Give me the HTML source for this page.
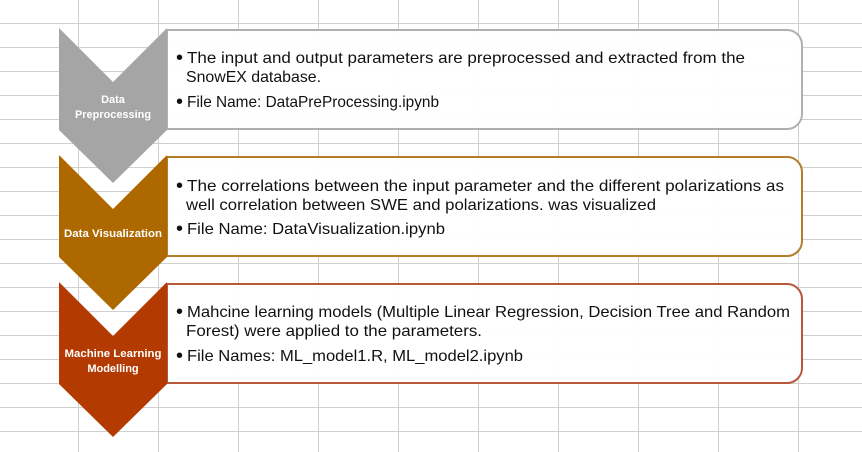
<!DOCTYPE html>
<html><head><meta charset="utf-8"><style>
html,body{margin:0;padding:0;background:#fff;}
svg{display:block;}
</style></head><body>
<svg width="862" height="452" xmlns="http://www.w3.org/2000/svg">
<defs>
<pattern id="g" width="80" height="24" patternUnits="userSpaceOnUse" x="78" y="23">
<path d="M0 0.5H80M0.5 0V24" stroke="#d0d0d0" stroke-width="1" fill="none"/>
</pattern>
</defs>
<rect width="862" height="452" fill="#fff"/>
<rect width="862" height="452" fill="url(#g)"/>

<g font-family="Liberation Sans, sans-serif" font-size="16" fill="#111">
<path d="M167 30H787a15 15 0 0 1 15 15V114a15 15 0 0 1 -15 15H167Z" fill="#fff" fill-opacity="0.92" stroke="#b0b0b0" stroke-width="2"/>
<text x="176" y="64" font-size="20">•</text>
<text x="187" y="63" textLength="558" lengthAdjust="spacingAndGlyphs">The input and output parameters are preprocessed and extracted from the</text>
<text x="186" y="82" textLength="135" lengthAdjust="spacingAndGlyphs">SnowEX database.</text>
<text x="176" y="108" font-size="20">•</text>
<text x="187" y="107" textLength="252" lengthAdjust="spacingAndGlyphs">File Name: DataPreProcessing.ipynb</text>

<path d="M167 157H787a15 15 0 0 1 15 15V241a15 15 0 0 1 -15 15H167Z" fill="#fff" fill-opacity="0.92" stroke="#b47d2e" stroke-width="2"/>
<text x="176" y="192" font-size="20">•</text>
<text x="187" y="191" textLength="597" lengthAdjust="spacingAndGlyphs">The correlations between the input parameter and the different polarizations as</text>
<text x="186" y="210" textLength="470" lengthAdjust="spacingAndGlyphs">well correlation between SWE and polarizations. was visualized</text>
<text x="176" y="235" font-size="20">•</text>
<text x="187" y="234" textLength="258" lengthAdjust="spacingAndGlyphs">File Name: DataVisualization.ipynb</text>

<path d="M167 284H787a15 15 0 0 1 15 15V368a15 15 0 0 1 -15 15H167Z" fill="#fff" fill-opacity="0.92" stroke="#b8583a" stroke-width="2"/>
<text x="176" y="318" font-size="20">•</text>
<text x="187" y="317" textLength="603" lengthAdjust="spacingAndGlyphs">Mahcine learning models (Multiple Linear Regression, Decision Tree and Random</text>
<text x="186" y="336" textLength="296" lengthAdjust="spacingAndGlyphs">Forest) were applied to the parameters.</text>
<text x="176" y="362" font-size="20">•</text>
<text x="187" y="361" textLength="336" lengthAdjust="spacingAndGlyphs">File Names: ML_model1.R, ML_model2.ipynb</text>
</g>

<path d="M59 28L113 82L167 28V130L113 183L59 130Z" fill="#a5a5a5"/>
<path d="M59 155L113 209L167 155V257L113 310L59 257Z" fill="#ad6800"/>
<path d="M59 282L113 336L167 282V384L113 437L59 384Z" fill="#b33a00"/>

<g font-family="Liberation Sans, sans-serif" font-size="11" font-weight="bold" fill="#fff" text-anchor="middle">
<text x="113" y="103">Data</text>
<text x="113" y="118" textLength="76" lengthAdjust="spacingAndGlyphs">Preprocessing</text>
<text x="113" y="237" textLength="98" lengthAdjust="spacingAndGlyphs">Data Visualization</text>
<text x="113" y="357" textLength="97" lengthAdjust="spacingAndGlyphs">Machine Learning</text>
<text x="113" y="372">Modelling</text>
</g>
</svg>
</body></html>
